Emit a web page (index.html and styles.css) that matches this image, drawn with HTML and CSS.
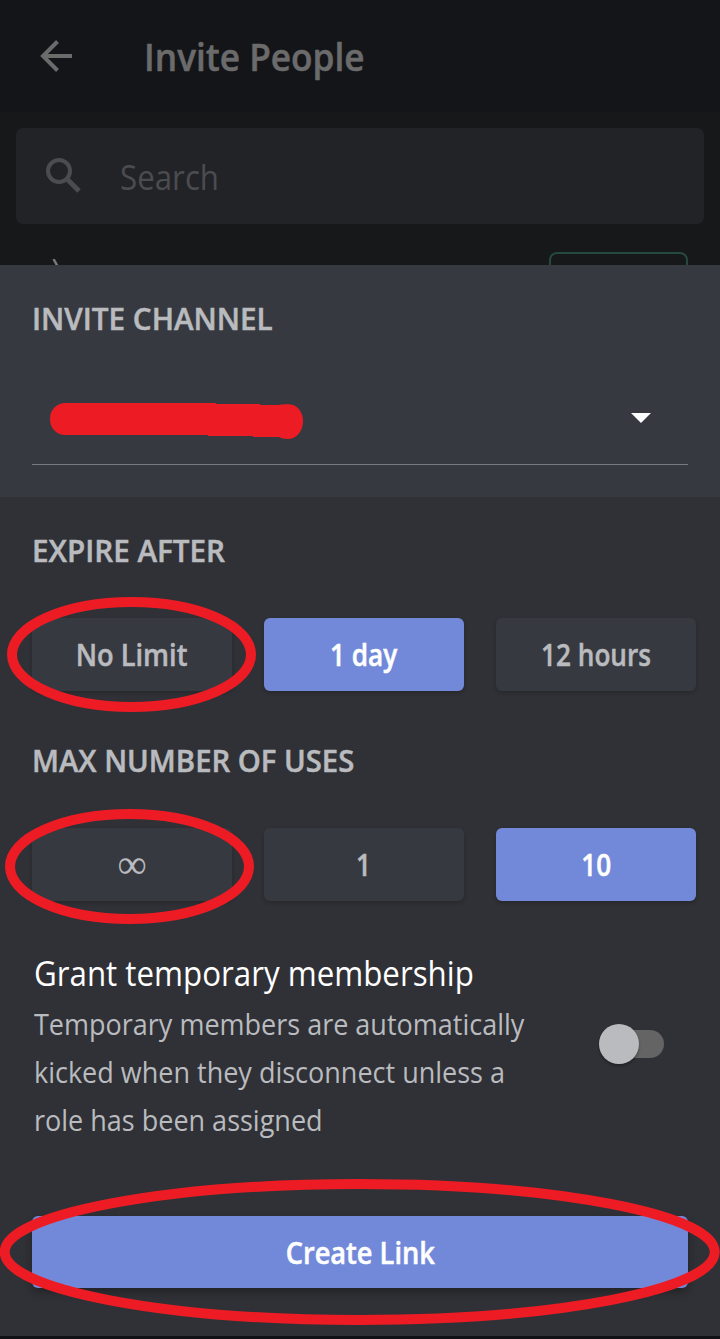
FILE: index.html
```
<!DOCTYPE html>
<html lang="en">
<head>
<meta charset="utf-8">
<title>Invite People</title>
<link rel="stylesheet" href="styles.css">
</head>
<body>
<div class="screen">
  <div class="backdrop">
    <header class="appbar">
      <svg class="back" width="32" height="32" viewBox="0 0 32 32"><path d="M17.500 1.500 3 16l14.500 14.500M3 16h29" fill="none" stroke="currentColor" stroke-width="4"/></svg>
      <h1 class="title"><span class="fit fit-title">Invite People</span></h1>
    </header>
    <div class="search">
      <svg class="lens" width="36" height="36" viewBox="0 0 36 36" fill="none" stroke="currentColor"><circle cx="13" cy="13" r="11" stroke-width="4"/><path d="M21.500 21.500 33 33" stroke-width="5"/></svg>
      <span class="fit fit-search">Search</span>
    </div>
    <div class="friend">
      <svg class="avatar" width="12" height="8" viewBox="0 0 12 8"><path d="M1.500 0 6 8" fill="none" stroke="currentColor" stroke-width="2.500"/></svg>
      <div class="invite"></div>
    </div>
  </div>

  <main class="sheet">
    <section class="channel">
      <h2 class="label"><span class="fit fit-channel">INVITE CHANNEL</span></h2>
      <div class="select">
        <svg class="redaction" width="254" height="38" viewBox="0 0 254 38"><path d="M16 1H166V2H210V3H228C232 2 237 2 241 2.500C249 4 253.500 12 253 20C252.500 30 246 37 238 37C234 37 231 36 229 35H203V34H158V33H16C5 33 0 25 0 17C0 8 6 1 16 1Z" fill="#ed1c24"/></svg>
        <svg class="caret" width="20" height="10" viewBox="0 0 20 10"><path d="M0 0h20L10 10z" fill="#fafcfd"/></svg>
      </div>
    </section>

    <section class="options">
      <h2 class="label"><span class="fit fit-expire">EXPIRE AFTER</span></h2>
      <div class="choices">
        <button class="choice"><span class="fit fit-limit">No Limit</span></button>
        <button class="choice selected"><span class="fit fit-hours">1 day</span></button>
        <button class="choice"><span class="fit fit-hours">12 hours</span></button>
      </div>
      <h2 class="label"><span class="fit fit-uses">MAX NUMBER OF USES</span></h2>
      <div class="choices">
        <button class="choice"><span class="infinity">∞</span></button>
        <button class="choice"><span class="fit fit-hours">1</span></button>
        <button class="choice selected"><span class="fit fit-hours">10</span></button>
      </div>
      <div class="grant">
        <div class="grant-text">
          <h3 class="grant-title"><span class="fit fit-grant">Grant temporary membership</span></h3>
          <p class="description"><span class="fit fit-desc">Temporary members are automatically<br>kicked when they disconnect unless a<br>role has been assigned</span></p>
        </div>
        <div class="toggle"><span class="knob"></span></div>
      </div>
      <button class="create"><span class="fit fit-limit">Create Link</span></button>
    </section>
  </main>

  <svg class="marks" width="720" height="1339" viewBox="0 0 720 1339" fill="none" stroke="#ed1c24" stroke-width="10">
    <ellipse cx="131.500" cy="654.500" rx="119.500" ry="52.500"/>
    <ellipse cx="129.500" cy="866.500" rx="119.500" ry="52.500"/>
    <ellipse cx="359.700" cy="1252" rx="355" ry="68"/>
  </svg>
</div>
</body>
</html>
```
FILE: styles.css
```
* { box-sizing: border-box; }
body { margin: 0; background: #141518; }
h1, h2, h3, p { margin: 0; }
button { border: 0; padding: 0; font: inherit; color: inherit; }

.screen {
  position: relative;
  width: 720px;
  height: 1339px;
  overflow: hidden;
  background: #111215;
  font-family: "Open Sans", "Noto Sans", sans-serif;
}

/* Horizontal fitting of each text run */
.fit { display: inline-block; white-space: nowrap; transform-origin: 0 50%; }
.fit-title { transform: scaleX(.927); }
.fit-search { transform: scaleX(.92); }
.fit-channel { transform: scaleX(.989); }
.fit-expire { transform: scaleX(.988); }
.fit-uses { transform: scaleX(.976); }
.fit-grant { transform: scaleX(.92); }
.fit-desc { transform: scaleX(.9); }
.fit-limit { transform: scaleX(.907); transform-origin: center; }
.fit-hours { transform: scaleX(.872); transform-origin: center; }
.title, .label, .choice, .create { -webkit-text-stroke: .5px currentColor; }

.backdrop { height: 265px; overflow: hidden; background: #17181a; }
.appbar {
  display: flex;
  align-items: center;
  height: 112px;
  padding-left: 40px;
  gap: 72px;
  background: #141518;
  color: #6b6b6c;
}
.title { font-size: 38px; font-weight: 600; line-height: 52px; }
.search {
  display: flex;
  align-items: center;
  height: 96px;
  margin: 16px 16px 0;
  padding-left: 30px;
  gap: 38px;
  border-radius: 7px;
  background: #222327;
  color: #4b4c50;
  font-size: 34px;
  line-height: 48px;
}
.fit-search { padding-top: 2px; }
.lens { margin-top: 0; }
.friend {
  display: flex;
  justify-content: space-between;
  padding: 28px 32px 0 52px;
}
.avatar { margin-top: 7px; color: #77787a; }
.invite { width: 139px; height: 64px; border: 2px solid #26493d; border-radius: 8px; }

.sheet { height: 1071px; background: #303136; }
.channel { height: 232px; padding: 33px 32px 0; background: #373940; }
.label {
  height: 42px;
  color: #b9bbbf;
  font-size: 30px;
  font-weight: 600;
  line-height: 42px;
}
.select {
  display: flex;
  align-items: flex-start;
  justify-content: space-between;
  height: 125px;
  padding: 62px 37px 0 18px;
  border-bottom: 1px solid #777a80;
}
.caret { margin-top: 11px; }

.options { padding: 33px 24px 0 32px; }
.choices {
  display: grid;
  grid-template-columns: repeat(3, 200px);
  gap: 32px;
  margin: 46px 0 49px;
}
.choices + .grant { margin-top: 48px; }
.choice, .create {
  height: 73px;
  padding-top: 1px;
  border-radius: 6px;
  background: #373940;
  color: #b9bbbf;
  font-size: 30px;
  font-weight: 600;
  line-height: 42px;
  box-shadow: 0 2px 4px rgba(0, 0, 0, .2);
}
.selected, .create { background: #7289da; color: #fff; }
.infinity { font: 41px/42px "Liberation Serif", serif; -webkit-text-stroke: 0; }

/* Bottom margin of the last choice row is trimmed to keep the section rhythm */
.choices:has(+ .grant) { margin-bottom: 48px; }
.grant { display: flex; justify-content: space-between; padding-right: 32px; }
.grant-text { padding-left: 2px; }
.grant-title { color: #fff; font-size: 34px; font-weight: 400; line-height: 48px; }
.description { margin-top: 3px; color: #b9bbbf; font-size: 30px; line-height: 48px; }
.toggle {
  position: relative;
  width: 60px;
  height: 28px;
  margin-top: 81px;
  border-radius: 14px;
  background: #646464;
}
.knob {
  position: absolute;
  left: -5px;
  top: -6px;
  width: 40px;
  height: 40px;
  border-radius: 50%;
  background: #b9bbbf;
  box-shadow: 0 2px 3px rgba(0, 0, 0, .3);
}
.create { display: block; width: 656px; height: 72px; margin-top: 72px; padding-top: 2px; box-shadow: 0 4px 8px rgba(0, 0, 0, .3); }

.marks { position: absolute; left: 0; top: 0; pointer-events: none; }
```
